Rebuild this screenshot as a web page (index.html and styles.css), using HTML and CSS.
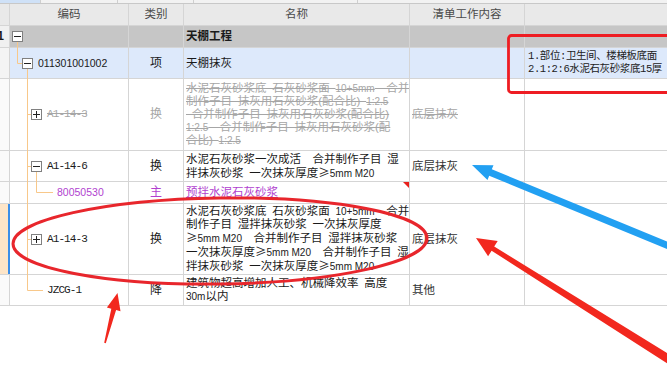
FILE: index.html
```html
<!DOCTYPE html>
<html>

<head>
    <meta charset="utf-8">
    <link rel="stylesheet" href="styles.css">
</head>

<body>
    <div class="sheet">
        <div class="strip">
            <span class="seg sel"></span>
            <span class="seg w77"></span>
            <span class="seg w76"></span>
            <span class="seg w164"></span>
            <span class="seg rest"></span>
        </div>

        <div class="row head">
            <div class="cell num"></div>
            <div class="cell">编码</div>
            <div class="cell">类别</div>
            <div class="cell">名称</div>
            <div class="cell">清单工作内容</div>
            <div class="cell"></div>
        </div>

        <!-- 分部 -->
        <div class="row part h22">
            <div class="cell num"><b>1</b></div>
            <div class="cell code lv0"><i class="tog"></i></div>
            <div class="cell kind"></div>
            <div class="cell name"><b>天棚工程</b></div>
            <div class="cell"></div>
            <div class="cell"></div>
        </div>

        <!-- 清单 -->
        <div class="row bill h31">
            <div class="cell num"></div>
            <div class="cell code lv1"><i class="tog"></i><span class="code-num">011301001002</span></div>
            <div class="cell kind">项</div>
            <div class="cell name">天棚抹灰</div>
            <div class="cell"></div>
            <div class="cell feature"><p class="txt">1.部位:卫生间、楼梯板底面<br>2.1:2:6水泥石灰砂浆底15厚</p></div>
        </div>

        <!-- 被换出的定额 -->
        <div class="row off h72">
            <div class="cell num"></div>
            <div class="cell code lv2"><i class="tog plus"></i><span class="code-t">A1-14-3</span></div>
            <div class="cell kind">换</div>
            <div class="cell name"><p class="txt">水泥石灰砂浆底&ensp;石灰砂浆面&ensp;<span class="en">10+5mm</span>&emsp;合并<br>制作子目&ensp;抹灰用石灰砂浆(配合比)&ensp;<span class="en">1:2.5</span><br>&ensp;合并制作子目&ensp;抹灰用石灰砂浆(配合比)<br><span class="en">1:2.5</span>&emsp;合并制作子目&ensp;抹灰用石灰砂浆(配<br>合比)&ensp;<span class="en">1:2.5</span></p></div>
            <div class="cell work">底层抹灰</div>
            <div class="cell"></div>
        </div>

        <div class="row h31">
            <div class="cell num"></div>
            <div class="cell code lv2"><i class="tog"></i><span class="code-t">A1-14-6</span></div>
            <div class="cell kind">换</div>
            <div class="cell name"><p class="txt">水泥石灰砂浆一次成活&emsp;合并制作子目&ensp;湿<br>拌抹灰砂浆&ensp;一次抹灰厚度<span class="ge">≥</span><span class="en">5mm M20</span></p></div>
            <div class="cell work">底层抹灰</div>
            <div class="cell"></div>
        </div>

        <!-- 主材 -->
        <div class="row mat h22">
            <div class="cell num"></div>
            <div class="cell code lv3"><span class="code-num">80050530</span></div>
            <div class="cell kind">主</div>
            <div class="cell name flag"><u>预拌水泥石灰砂浆</u></div>
            <div class="cell"></div>
            <div class="cell"></div>
        </div>

        <div class="row cur h71">
            <div class="cell num"></div>
            <div class="cell code lv2"><i class="tog plus"></i><span class="code-t">A1-14-3</span></div>
            <div class="cell kind">换</div>
            <div class="cell name"><p class="txt">水泥石灰砂浆底&ensp;石灰砂浆面&ensp;<span class="en">10+5mm</span>&emsp;合并<br>制作子目&ensp;湿拌抹灰砂浆&ensp;一次抹灰厚度<br><span class="ge">≥</span><span class="en">5mm M20</span>&emsp;合并制作子目&ensp;湿拌抹灰砂浆<br>一次抹灰厚度<span class="ge">≥</span><span class="en">5mm M20</span>&emsp;合并制作子目&ensp;湿<br>拌抹灰砂浆&ensp;一次抹灰厚度<span class="ge">≥</span><span class="en">5mm M20</span></p></div>
            <div class="cell work">底层抹灰</div>
            <div class="cell"></div>
        </div>

        <div class="row h31">
            <div class="cell num"></div>
            <div class="cell code lv2b"><span class="code-t">JZCG-1</span></div>
            <div class="cell kind">降</div>
            <div class="cell name"><p class="txt">建筑物超高增加人工、机械降效率&ensp;高度<br><span class="en">30m</span>以内</p></div>
            <div class="cell work">其他</div>
            <div class="cell"></div>
        </div>

        <!-- tree connectors -->
        <svg class="overlay" width="667" height="369">
            <path d="M17.5 42V63.5H22 M27.5 69V290.5H43 M27.5 114.5H31 M27.5 166.5H31 M27.5 239.5H31 M36.5 172V192.5H53" stroke="#f8c88a" fill="none" />
        </svg>

        <!-- markup drawn on the screenshot -->
        <svg class="overlay" width="667" height="369">
            <rect x="508.5" y="35.5" width="200" height="57" rx="3" fill="none" stroke="#ee1d23" stroke-width="2.8" />
            <ellipse cx="220" cy="241" rx="207" ry="43" fill="none" stroke="#e8262c" stroke-width="3" transform="rotate(-0.8 220 241)" />
            <polygon fill="#22a0f2" points="472,165 493.5,165.2 491.8,169.3 704.3,256.8 701.7,263.2 489.2,175.8 487.5,180" />
            <polygon fill="#f2281e" points="476,238 497.7,241 494.2,246.5 681.6,361.9 676.8,369.5 491.6,250.7 488.1,256.2" />
            <polygon fill="#f2281e" points="117.5,293 120.5,311.2 116.1,310 105.8,343.2 104.2,342.8 111.3,308.8 106.9,307.6" />
        </svg>
    </div>
</body>

</html>
```

FILE: styles.css
```css
body {
    margin: 0;
    background: #fff;
    font-family: "Liberation Sans", "Noto Sans CJK SC", sans-serif;
    font-size: 11.5px;
    color: #1a1a1a;
}

.sheet {
    position: relative;
    width: 667px;
    height: 369px;
    overflow: hidden;
}

/* thin strip of the row above the header */

.strip {
    display: flex;
    height: 4px;
    box-sizing: border-box;
    border-bottom: 1px solid #c8c8c8;
    background: #f2f2f2;
}

.seg {
    box-sizing: border-box;
    border-right: 1px solid #cfcfcf;
}

.seg.sel {
    width: 41px;
    background: #cfe1f7;
}

.w77 { width: 77px; }
.w76 { width: 76px; }
.w164 { width: 164px; }
.rest { flex: 1; border-right: 0; }

/* grid rows */

.row {
    display: grid;
    grid-template-columns: 10px 119px 55px 226px 115px 142px;
    box-sizing: border-box;
    border-bottom: 1px solid #d5d5d5;
}

.h22 { height: 22px; }
.h31 { height: 31px; }
.h71 { height: 71px; }
.h72 { height: 72px; }

.cell {
    display: flex;
    align-items: center;
    box-sizing: border-box;
    border-right: 1px solid #d5d5d5;
    line-height: 13px;
    white-space: nowrap;
    overflow: hidden;
    min-width: 0;
}

.cell:last-child {
    border-right: 0;
}

.txt {
    margin: 0;
}

.head {
    height: 22px;
    background: #e9e9e9;
    color: #4a4a4a;
}

.head .cell {
    justify-content: center;
}

.num {
    justify-content: flex-end;
    padding-right: 5px;
    background: #fafafa;
    font-size: 12px;
}

.head .num {
    background: #e9e9e9;
}

.part {
    background: #c6c6c6;
}

.part .num {
    background: #f0f0f0;
}

.bill {
    background: #dde9fb;
}

.bill .num {
    background: #f4f4f4;
}

.cur .num {
    background: #fde5c8;
    border-right: 2px solid #3a8ee8;
}

/* code column */

.lv0 { padding-left: 2px; }
.lv1 { padding-left: 12px; }
.lv2 { padding-left: 21px; }
.lv2b { padding-left: 37px; }
.lv3 { padding-left: 47px; }

.tog {
    position: relative;
    flex: none;
    width: 11px;
    height: 11px;
    box-sizing: border-box;
    border: 1px solid #808080;
    background: #fff;
    margin-right: 5px;
}

.tog::before {
    content: "";
    position: absolute;
    left: 1px;
    right: 1px;
    top: 4px;
    height: 1px;
    background: #222;
}

.tog.plus::after {
    content: "";
    position: absolute;
    top: 1px;
    bottom: 1px;
    left: 4px;
    width: 1px;
    background: #222;
}

.code-t {
    font-family: "Liberation Mono", monospace;
    font-size: 11px;
    letter-spacing: -0.9px;
}

.code-num {
    font-size: 10.5px;
}

.kind {
    justify-content: center;
    font-size: 12px;
}

.name {
    padding-left: 2px;
}

.work {
    padding-left: 2px;
    color: #333;
}

.en {
    font-size: 10px;
}

.ge {
    font-family: "Noto Sans CJK SC", sans-serif;
}

.feature {
    padding-left: 3px;
    font-family: "Liberation Mono", "Noto Sans CJK SC", monospace;
    font-size: 10.5px;
    letter-spacing: -0.4px;
    color: #222;
}

/* struck out (replaced) item */

.off .cell {
    color: #a6a6a6;
}

.off .name,
.off .work,
.off .code-t {
    text-decoration: line-through;
}

/* material row */

.mat .code-num,
.mat .kind,
.mat .name {
    color: #b13fcf;
}

.flag {
    position: relative;
}

.flag::after {
    content: "";
    position: absolute;
    top: 0;
    right: 0;
    border-top: 6px solid #e8201c;
    border-left: 6px solid transparent;
}

.overlay {
    position: absolute;
    left: 0;
    top: 0;
    pointer-events: none;
}
```
